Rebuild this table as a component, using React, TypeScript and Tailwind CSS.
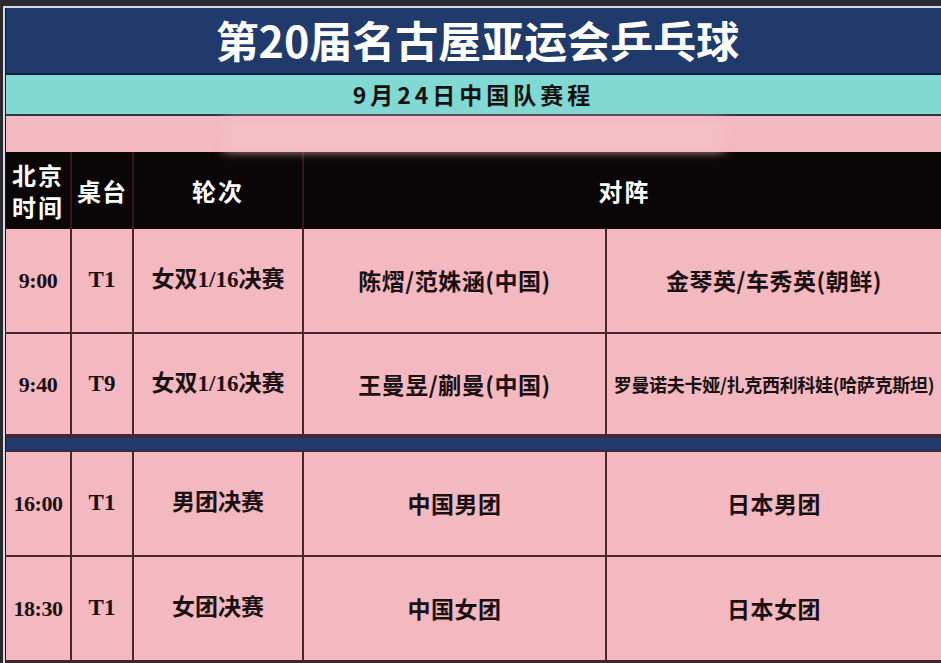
const cjk = "font-['Noto_Sans_CJK_SC',sans-serif]"
const serif = "font-['Liberation_Serif','Noto_Sans_CJK_SC',serif]"

const rows1 = [
  { time: "9:00", table: "T1", round: "女双1/16决赛", a: "陈熠/范姝涵(中国)", b: "金琴英/车秀英(朝鲜)", small: false },
  { time: "9:40", table: "T9", round: "女双1/16决赛", a: "王曼昱/蒯曼(中国)", b: "罗曼诺夫卡娅/扎克西利科娃(哈萨克斯坦)", small: true },
]

const rows2 = [
  { time: "16:00", table: "T1", round: "男团决赛", a: "中国男团", b: "日本男团", small: false },
  { time: "18:30", table: "T1", round: "女团决赛", a: "中国女团", b: "日本女团", small: false },
]

type Row = (typeof rows1)[number]

function MatchRow({ r, h, last }: { r: Row; h: string; last?: boolean }) {
  const cell = "flex items-center justify-center border-r-2 border-[#4a2630]"
  return (
    <div
      className={`grid grid-cols-[66px_62px_170px_303px_1fr] ${h} bg-[#f3b8c0] text-[#1a1012] font-bold ${
        last ? "" : "border-b-2 border-[#4a2630]"
      }`}
    >
      <div className={`${cell} ${serif} text-[22px] tracking-[-0.5px]`}>{r.time}</div>
      <div className={`${cell} ${serif} text-[23px]`}>{r.table}</div>
      <div className={`${cell} ${serif} text-[23px]`}>{r.round}</div>
      <div className={`${cell} ${cjk} text-[23px] tracking-[0.5px]`}>{r.a}</div>
      <div className={`flex items-center justify-center ${cjk} ${r.small ? "text-[18px] tracking-[-0.3px]" : "text-[23px] tracking-[0.5px]"}`}>
        {r.b}
      </div>
    </div>
  )
}

export default function App() {
  return (
    <div className="h-[663px] w-[941px] overflow-hidden bg-[#2b2a30] flex flex-col">
      <div className="h-[6px] shrink-0" />
      <div className="flex-1 min-h-0 ml-[3px] border-t-2 border-l-2 border-[#d9d9e2]">
        <div className="h-full flex flex-col border-l border-[#1a1a22] border-b-[3px] border-b-[#3a2a2e]">
          {/* title */}
          <div className="h-[67px] shrink-0 bg-[#213a6c] flex items-center justify-center border-b-2 border-[#0f1c36]">
            <h1 className={`${cjk} text-white font-bold text-[43px] leading-none pl-[8px] mt-[-2px]`}>
              第20届名古屋亚运会乒乓球
            </h1>
          </div>
          <div className="h-[41px] shrink-0 bg-[#80d9d3] flex items-center justify-center border-b-2 border-[#2e3a3e]">
            <div className={`${cjk} text-[#111] font-bold text-[23px] tracking-[4px] leading-none`}>9月24日中国队赛程</div>
          </div>
          <div className="h-[36px] shrink-0 bg-[#f3b8c0] flex justify-center">
            <div className="mt-[4px] h-[30px] w-[500px] bg-[#f5bfc7] blur-[6px]" />
          </div>

          {/* header */}
          <div className={`grid shrink-0 grid-cols-[66px_62px_170px_1fr] h-[77px] bg-[#0b0608] text-white font-bold ${cjk}`}>
            <div className="flex flex-col items-center justify-center border-r-2 border-[#3a1420] text-[24px] leading-[32px] tracking-[2px]">
              <span className="block h-[32px]">北京</span>
              <span className="block h-[32px]">时间</span>
            </div>
            <div className="flex items-center justify-center border-r-2 border-[#3a1420] text-[24px] tracking-[1px]">桌台</div>
            <div className="flex items-center justify-center border-r-2 border-[#3a1420] text-[24px] tracking-[2px]">轮次</div>
            <div className="flex items-center justify-center text-[24px] tracking-[2px] pl-[4px]">对阵</div>
          </div>

          <MatchRow r={rows1[0]} h="h-[105px] shrink-0" />
          <MatchRow r={rows1[1]} h="h-[102px] shrink-0" />

          <div className="h-[16px] shrink-0 bg-[#213a6c] border-y-2 border-[#3a2a40]" />

          <MatchRow r={rows2[0]} h="h-[105px] shrink-0" />
          <MatchRow r={rows2[1]} h="flex-1 min-h-0" last />
        </div>
      </div>
    </div>
  )
}
